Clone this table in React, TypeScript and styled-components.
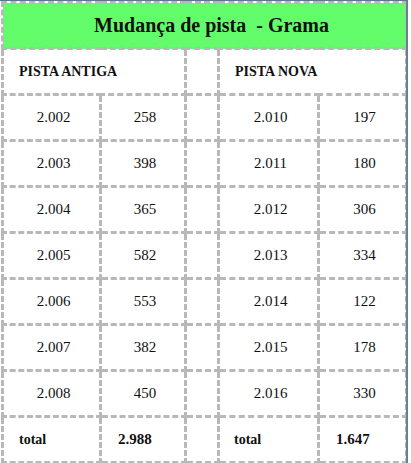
import React from 'react';
import styled, { createGlobalStyle } from 'styled-components';

// Mock data
const OLD_TRACK = [
  { id: '2.002', value: 258 },
  { id: '2.003', value: 398 },
  { id: '2.004', value: 365 },
  { id: '2.005', value: 582 },
  { id: '2.006', value: 553 },
  { id: '2.007', value: 382 },
  { id: '2.008', value: 450 },
];

const NEW_TRACK = [
  { id: '2.010', value: 197 },
  { id: '2.011', value: 180 },
  { id: '2.012', value: 306 },
  { id: '2.013', value: 334 },
  { id: '2.014', value: 122 },
  { id: '2.015', value: 178 },
  { id: '2.016', value: 330 },
];

const GlobalStyle = createGlobalStyle`
  html, body {
    margin: 0;
    padding: 0;
    background: #fff;
  }
`;

// Styled Components
const Frame = styled.div`
  width: 408px;
  height: 463px;
  border-top: 1px solid #5d7590;
  border-right: 2px solid #6b7f94;
  box-sizing: border-box;
  overflow: hidden;
`;

const Table = styled.table`
  border-collapse: collapse;
  width: 406px;
  margin-left: 1px;
  font-family: 'Liberation Serif', 'Times New Roman', serif;
  color: #111;
  table-layout: fixed;
`;

const TitleCell = styled.th`
  background-color: #63fd6c;
  border: 3px dashed #b8b8b8;
  height: 43px;
  padding: 0 0 0 14px;
  font-size: 20px;
  font-weight: bold;
  text-align: center;
  white-space: pre;
`;

interface CellProps {
  $bold?: boolean;
  $align?: 'left' | 'center';
  $pad?: number;
}

const Cell = styled.td<CellProps>`
  border: 3px dashed #b8b8b8;
  height: 43px;
  padding: 0 0 0 ${props => props.$pad ?? 0}px;
  font-size: ${props => (props.$bold ? '14px' : '15px')};
  font-weight: ${props => (props.$bold ? 'bold' : 'normal')};
  text-align: ${props => props.$align || 'center'};
  white-space: nowrap;
`;

const NumberCell = styled(Cell)`
  font-size: 15px;
`;

const Spacer = styled.td`
  border: 3px dashed #b8b8b8;
  padding: 0;
`;

const App: React.FC = () => {
  return (
    <Frame>
      <GlobalStyle />
      <Table>
        <colgroup>
          <col style={{ width: 98 }} />
          <col style={{ width: 85 }} />
          <col style={{ width: 33 }} />
          <col style={{ width: 100 }} />
          <col style={{ width: 88 }} />
        </colgroup>
        <tbody>
          <tr>
            <TitleCell colSpan={5}>{'Mudança de pista  - Grama'}</TitleCell>
          </tr>
          <tr>
            <Cell colSpan={2} $bold $align="left" $pad={15}>PISTA ANTIGA</Cell>
            <Spacer />
            <Cell colSpan={2} $bold $align="left" $pad={15}>PISTA NOVA</Cell>
          </tr>
          {OLD_TRACK.map((row, i) => (
            <tr key={row.id}>
              <Cell $pad={4}>{row.id}</Cell>
              <Cell $pad={4}>{row.value}</Cell>
              <Spacer />
              <Cell $pad={4}>{NEW_TRACK[i].id}</Cell>
              <Cell $pad={4}>{NEW_TRACK[i].value}</Cell>
            </tr>
          ))}
          <tr>
            <Cell $bold $align="left" $pad={15}>total</Cell>
            <NumberCell $bold $align="left" $pad={16}>2.988</NumberCell>
            <Spacer />
            <Cell $bold $align="left" $pad={14}>total</Cell>
            <NumberCell $bold $align="left" $pad={16}>1.647</NumberCell>
          </tr>
        </tbody>
      </Table>
    </Frame>
  );
};

export default App;
